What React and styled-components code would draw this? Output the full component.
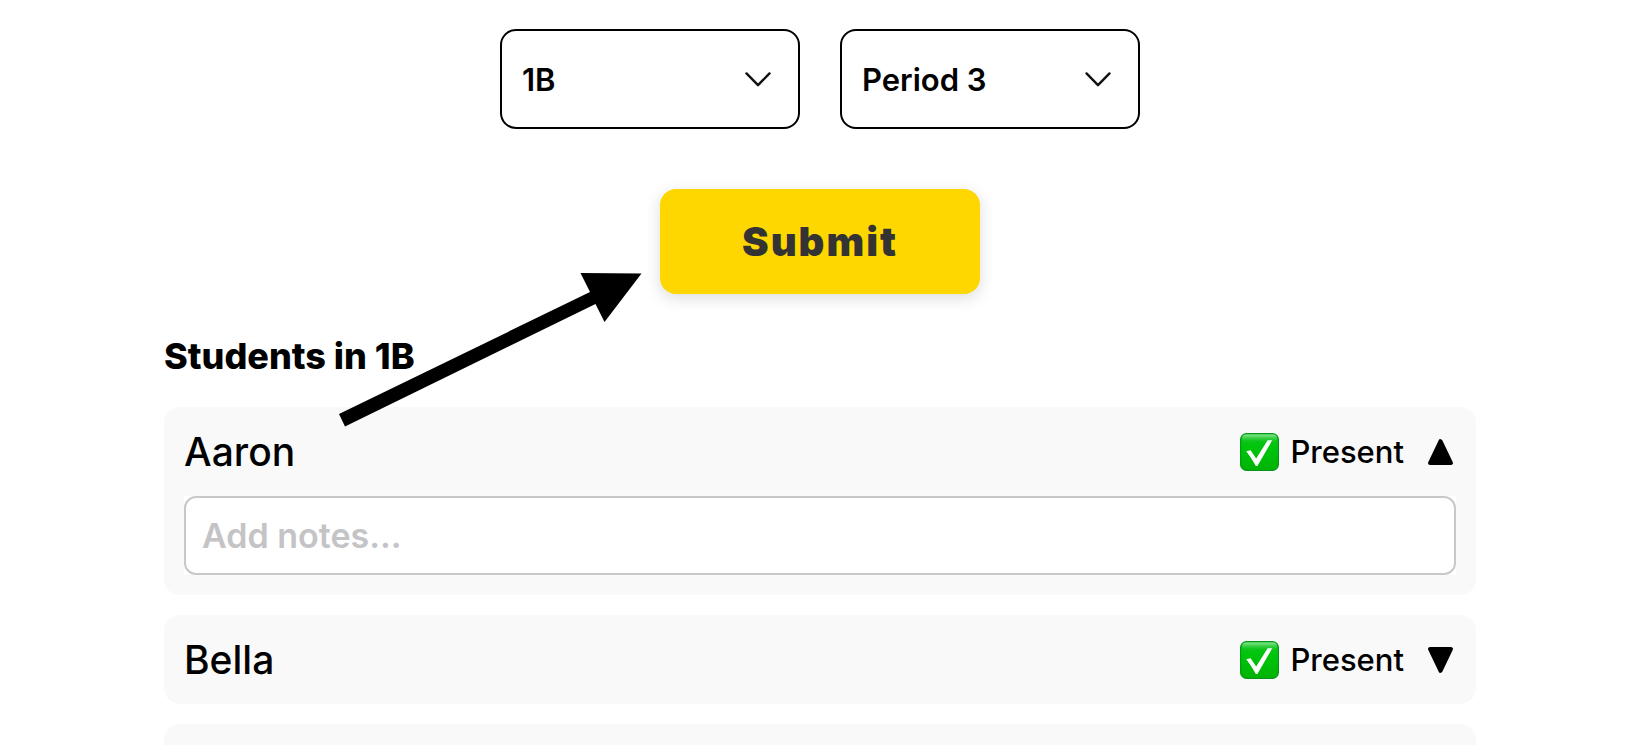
import React, { useState } from "react";
import styled, { createGlobalStyle } from "styled-components";

const GlobalStyle = createGlobalStyle`
  *, *::before, *::after { box-sizing: border-box; }
  body {
    margin: 0;
    background: #fff;
    color: #000;
    font-family: Inter, "Liberation Sans", sans-serif;
  }
  button, select, textarea { font: inherit; color: inherit; }
`;

const Page = styled.main`
  height: 100vh;
  overflow: hidden;
  padding: 29px 10% 0;
  display: flex;
  flex-direction: column;
`;

const Filters = styled.div`
  display: flex;
  justify-content: center;
  gap: 40px;
`;

const SelectBox = styled.div`
  display: grid;
  align-items: center;
  width: 300px;

  > * { grid-area: 1 / 1; }
`;

const Select = styled.select`
  appearance: none;
  width: 100%;
  height: 100px;
  padding: 0 60px 0 20px;
  border: 2px solid #000;
  border-radius: 16px;
  background: #fff;
  font-size: 31px;
  font-weight: 600;
`;

const Chevron = styled.svg`
  justify-self: end;
  width: 28px;
  height: 16px;
  margin-right: 28px;
  pointer-events: none;
`;

const SubmitArea = styled.div`
  position: relative;
  align-self: center;
  width: 320px;
  margin-top: 60px;
`;

const SubmitButton = styled.button`
  display: block;
  width: 100%;
  height: 105px;
  padding: 0;
  border: 0;
  border-radius: 16px;
  background: #ffd700;
  box-shadow: 0 4px 16px rgba(0, 0, 0, 0.14);
  color: #333;
  font-size: 40px;
  font-weight: 900;
  letter-spacing: 2px;
`;

const Pointer = styled.svg`
  position: absolute;
  z-index: 1;
  top: 83px;
  right: calc(100% + 18px);
  width: 304px;
  height: 156px;
  pointer-events: none;
`;

const Heading = styled.h2`
  margin: 40px 0 28px;
  font-size: 36px;
  line-height: 45px;
  font-weight: 800;
`;

const List = styled.ul`
  display: flex;
  flex-direction: column;
  gap: 20px;
  margin: 0;
  padding: 0;
  list-style: none;
`;

const Card = styled.li`
  display: flex;
  flex-direction: column;
  gap: 20px;
  min-height: 89px;
  padding: 20px;
  border-radius: 16px;
  background: #f9f9f9;
`;

const CardRow = styled.div`
  display: flex;
  align-items: center;
  height: 49px;
`;

const Name = styled.span`
  flex: 1;
  font-size: 39px;
  font-weight: 500;
`;

const PlainButton = styled.button`
  display: flex;
  align-items: center;
  padding: 0;
  border: 0;
  background: none;
`;

const Status = styled(PlainButton)`
  gap: 11px;
  margin-right: 21px;
  font-size: 31px;
  font-weight: 500;
`;

const NoteField = styled.label`
  display: block;
  background: #fff;
`;

const Note = styled.textarea`
  display: block;
  width: 100%;
  height: 79px;
  padding: 16px;
  border: 2px solid #c8c8c8;
  border-radius: 12px;
  background: #fff;
  resize: none;
  overflow: hidden;
  font-size: 34px;
  line-height: 43px;
  font-weight: 600;

  &::placeholder { color: #c4c4c6; opacity: 1; }
`;

function Dropdown({ label, options, initial }) {
  const [value, setValue] = useState(initial);
  return (
    <SelectBox>
      <Select aria-label={label} value={value} onChange={(e) => setValue(e.target.value)}>
        {options.map((o) => <option key={o}>{o}</option>)}
      </Select>
      <Chevron viewBox="0 0 28 16" aria-hidden="true">
        <path d="M2.5 2.4 L14 14.2 L25.5 2.4" fill="none" stroke="#111" strokeWidth="2.4" strokeLinecap="round" strokeLinejoin="round" />
      </Chevron>
    </SelectBox>
  );
}

function CheckMark({ id }) {
  return (
    <svg width="39" height="38" viewBox="0 0 39 38" aria-hidden="true">
      <defs>
        <linearGradient id={id + "-face"} x1="0" y1="0" x2="0" y2="1">
          <stop offset="0" stopColor="#14c225" />
          <stop offset="0.35" stopColor="#00c50c" />
          <stop offset="1" stopColor="#00b304" />
        </linearGradient>
        <linearGradient id={id + "-shine"} x1="0" y1="0" x2="0" y2="1">
          <stop offset="0" stopColor="#8fe796" />
          <stop offset="1" stopColor="#20c92d" stopOpacity="0" />
        </linearGradient>
      </defs>
      <rect x="0.6" y="0.6" width="37.8" height="36.8" rx="6" fill={"url(#" + id + "-face)"} stroke="#07971a" strokeWidth="1.2" />
      <rect x="2" y="1.5" width="35" height="8" rx="4" fill={"url(#" + id + "-shine)"} />
      <path d="M6.2 18.2 L10.6 17.2 L16.2 25.6 L27.6 7.3 L32.2 7.3 L17.4 33 L15.8 33 C12.8 27.6 9.8 22.8 6.2 18.2 Z" fill="#fff" />
    </svg>
  );
}

function Triangle({ up }) {
  return (
    <svg width="31" height="28" viewBox="0 0 31 28" aria-hidden="true">
      <path
        d={up
          ? "M15.5 3.2 L26 25 H5 Z"
          : "M15.5 24.8 L26 3 H5 Z"}
        fill="#000"
        stroke="#000"
        strokeWidth="4"
        strokeLinejoin="round"
      />
    </svg>
  );
}

function Student({ name, startOpen }) {
  const [open, setOpen] = useState(startOpen);
  const [present, setPresent] = useState(true);
  return (
    <Card>
      <CardRow>
        <Name>{name}</Name>
        <Status type="button" onClick={() => setPresent(!present)}>
          {present && <CheckMark id={name} />}
          {present ? "Present" : "Absent"}
        </Status>
        <PlainButton type="button" aria-label={"Notes for " + name} aria-expanded={open} onClick={() => setOpen(!open)}>
          <Triangle up={open} />
        </PlainButton>
      </CardRow>
      {open && (
        <NoteField>
          <Note rows={1} aria-label={"Notes for " + name} placeholder="Add notes..." />
        </NoteField>
      )}
    </Card>
  );
}

export default function App() {
  return (
    <>
      <GlobalStyle />
      <Page>
        <Filters>
          <Dropdown label="Class" options={["1A", "1B", "1C"]} initial="1B" />
          <Dropdown label="Period" options={["Period 1", "Period 2", "Period 3"]} initial="Period 3" />
        </Filters>
        <SubmitArea>
          <SubmitButton type="button">Submit</SubmitButton>
          <Pointer viewBox="0 0 304 156" aria-hidden="true">
            <path d="M1 142 L252 20 L242.5 1 L303.5 1.5 L266.5 50 L257.5 32 L7 154.5 Z" fill="#000" />
          </Pointer>
        </SubmitArea>
        <Heading>Students in 1B</Heading>
        <List>
          <Student name="Aaron" startOpen />
          <Student name="Bella" startOpen={false} />
          <Card />
        </List>
      </Page>
    </>
  );
}
